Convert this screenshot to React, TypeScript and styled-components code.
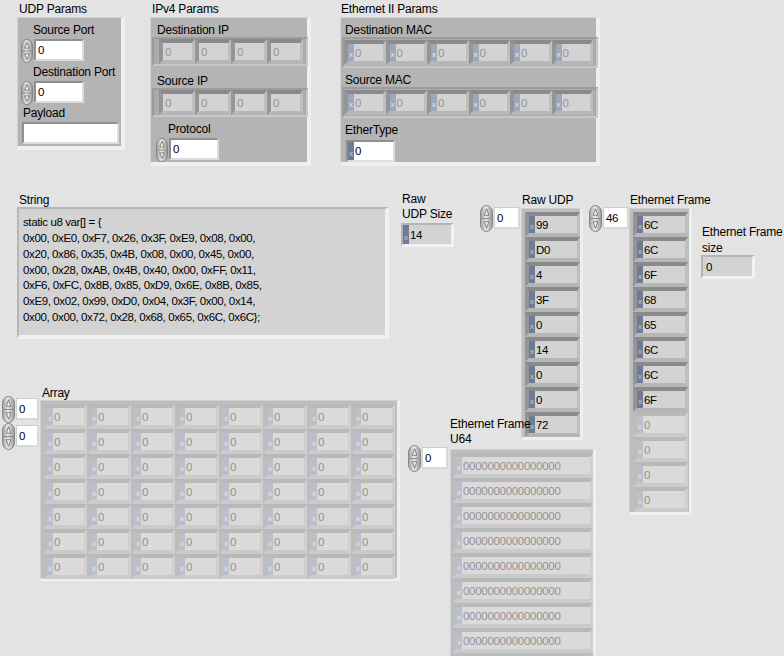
import React from 'react';
import styled, { createGlobalStyle } from 'styled-components';

const Global = createGlobalStyle`
  html, body { margin: 0; padding: 0; background: #e3e3e3; }
  body { font-family: "Liberation Sans", Arial, sans-serif; }
`;

const Panel = styled.div`
  position: relative;
  width: 784px;
  height: 656px;
  overflow: hidden;
  background: #e3e3e3;
  color: #000;
  font-family: "Liberation Sans", Arial, sans-serif;
`;

/* free-canvas placement of front panel objects */
const Spot = styled.div<{ $x: number; $y: number; $z?: number }>`
  position: absolute;
  left: ${p => p.$x}px;
  top: ${p => p.$y}px;
  z-index: ${p => p.$z ?? 0};
`;

const Caption = styled.div<{ $ml?: number; $mt?: number; $lh?: number }>`
  font-size: 12px;
  line-height: ${p => p.$lh ?? 14}px;
  white-space: pre;
  margin-left: ${p => p.$ml ?? 0}px;
  margin-top: ${p => p.$mt ?? 0}px;
  letter-spacing: -0.2px;
`;

const ClusterBox = styled.div<{ $w: number; $h: number }>`
  box-sizing: border-box;
  width: ${p => p.$w}px;
  height: ${p => p.$h}px;
  background: #b4b4b4;
  border-style: solid;
  border-width: 1px 4px 4px 1px;
  border-color: #d4d4d4 #efefef #efefef #d4d4d4;
  display: flex;
  flex-direction: column;
  align-items: flex-start;
`;

const SubCluster = styled.div<{ $w: number; $h: number; $pl: number; $cw: number }>`
  box-sizing: border-box;
  width: ${p => p.$w}px;
  height: ${p => p.$h}px;
  margin-left: 1px;
  padding-left: ${p => p.$pl}px;
  border-style: solid;
  border-width: 2px;
  border-color: #9c9c9c #c8c8c8 #c8c8c8 #9c9c9c;
  background: #ababab;
  display: grid;
  grid-auto-flow: column;
  grid-auto-columns: ${p => p.$cw}px;
  align-content: center;
`;

const Cell = styled.div<{ $w: number; $off?: boolean }>`
  box-sizing: border-box;
  width: ${p => p.$w}px;
  height: 25px;
  border-style: solid;
  border-width: 4px 3px 4px 4px;
  border-color: ${p => (p.$off ? '#b9b9b9 #cfcfcf #cbcbcb #bdbdbd' : '#8a8a8a #bebebe #b6b6b6 #959595')};
  background: ${p => (p.$off ? '#dadada' : '#d3d3d3')};
  display: flex;
  align-items: stretch;
  overflow: hidden;
`;

const Radix = styled.span<{ $tone: 'dark' | 'mid' | 'light' }>`
  flex: none;
  width: 6px;
  box-sizing: border-box;
  padding-bottom: 2px;
  background: ${p => (p.$tone === 'dark' ? '#6d7b97' : p.$tone === 'mid' ? '#9ea8ba' : '#b9c0cc')};
  color: ${p => (p.$tone === 'dark' ? '#c4cbd9' : '#e4e7ec')};
  font-size: 8px;
  line-height: 8px;
  display: flex;
  align-items: flex-end;
  justify-content: center;
`;

const Val = styled.span<{ $muted?: boolean; $pl?: number }>`
  padding-left: ${p => p.$pl ?? 1}px;
  font-size: 11.5px;
  letter-spacing: -0.3px;
  color: ${p => (p.$muted ? '#939393' : '#000')};
  display: flex;
  align-items: center;
  white-space: pre;
`;

const CtlField = styled.div<{ $w: number; $h: number; $mt?: number; $ml?: number; $flat?: boolean }>`
  box-sizing: border-box;
  width: ${p => p.$w}px;
  height: ${p => p.$h}px;
  margin-top: ${p => p.$mt ?? 0}px;
  margin-left: ${p => p.$ml ?? 0}px;
  background: #fff;
  border-style: solid;
  border-width: ${p => (p.$flat ? '1px 2px 2px 1px' : '2px')};
  border-color: ${p => (p.$flat ? '#cdcdcd #d9d9d9 #d9d9d9 #cdcdcd' : '#8f8f8f #dcdcdc #dcdcdc #8f8f8f')};
  display: flex;
  align-items: stretch;
`;

const IndField = styled.div<{ $w: number; $h: number }>`
  box-sizing: border-box;
  width: ${p => p.$w}px;
  height: ${p => p.$h}px;
  background: #d3d3d3;
  border-style: solid;
  border-width: 2px 3px 3px 2px;
  border-color: #b4b4b4 #f2f2f2 #f2f2f2 #b4b4b4;
  display: flex;
  align-items: stretch;
`;

const NumRow = styled.div<{ $ml?: number; $mt?: number }>`
  display: flex;
  align-items: flex-start;
  gap: 1px;
  margin-left: ${p => p.$ml ?? 0}px;
  margin-top: ${p => p.$mt ?? 0}px;
`;

const IndexStack = styled.div`
  display: flex;
  flex-direction: column;
`;

const SpinSvg = styled.svg`
  display: block;
  flex: none;
`;

function Spinner({ h = 24, w = 12 }: { h?: number; w?: number }) {
  const cx = w / 2;
  const r = (w - 1) / 2;
  const mid = h / 2;
  return (
    <SpinSvg width={w} height={h} viewBox={`0 0 ${w} ${h}`}>
      <defs>
        <linearGradient id="spinG" x1="0" y1="0" x2="1" y2="0">
          <stop offset="0" stopColor="#9c9c9c" />
          <stop offset="0.45" stopColor="#ebebeb" />
          <stop offset="1" stopColor="#949494" />
        </linearGradient>
      </defs>
      <path
        d={`M0.5 ${mid} L0.5 ${r + 1.5} A${r} ${r + 1} 0 0 1 ${w - 0.5} ${r + 1.5} L${w - 0.5} ${mid} L${w - 0.5} ${h - r - 1.5} A${r} ${r + 1} 0 0 1 0.5 ${h - r - 1.5} Z`}
        fill="url(#spinG)"
        stroke="#878787"
      />
      <line x1="1" y1={mid} x2={w - 1} y2={mid} stroke="#8a8a8a" />
      <path d={`M${cx} ${h * 0.14} L${cx + 2.3} ${h * 0.38} H${cx - 2.3} Z`} fill="#f4f4f4" stroke="#666" strokeWidth="0.8" />
      <path d={`M${cx} ${h * 0.86} L${cx + 2.3} ${h * 0.62} H${cx - 2.3} Z`} fill="#f4f4f4" stroke="#666" strokeWidth="0.8" />
    </SpinSvg>
  );
}

function NumCtl({ w, value, ml, mt }: { w: number; value: string; ml?: number; mt?: number }) {
  return (
    <NumRow $ml={ml} $mt={mt}>
      <Spinner h={24} />
      <CtlField $w={w} $h={22}>
        <Val $pl={2}>{value}</Val>
      </CtlField>
    </NumRow>
  );
}

function IndexCtl({ value, w }: { value: string; w: number }) {
  return (
    <NumRow>
      <Spinner h={27} w={13} />
      <CtlField $w={w} $h={22} $mt={2} $flat>
        <Val $pl={2}>{value}</Val>
      </CtlField>
    </NumRow>
  );
}

const ArrayFrame = styled.div<{ $w: number; $h: number; $cols: number; $cw: number; $pl: number }>`
  box-sizing: border-box;
  width: ${p => p.$w}px;
  height: ${p => p.$h}px;
  background: #bdbdbd;
  border-style: solid;
  border-width: 1px 3px 3px 1px;
  border-color: #d0d0d0 #efefef #efefef #d0d0d0;
  padding: 3px 0 0 ${p => p.$pl}px;
  display: grid;
  grid-template-columns: repeat(${p => p.$cols}, ${p => p.$cw}px);
  grid-auto-rows: 25px;
  align-content: start;
`;

const StringBox = styled.div`
  box-sizing: border-box;
  width: 372px;
  height: 132px;
  background: #d3d3d3;
  border-style: solid;
  border-width: 2px 4px 4px 2px;
  border-color: #b6b6b6 #f0f0f0 #f0f0f0 #b6b6b6;
  padding: 6px 0 0 4px;
  font-size: 11.5px;
  letter-spacing: -0.38px;
  line-height: 15.85px;
  white-space: pre;
`;

const PayloadField = styled.div`
  box-sizing: border-box;
  width: 97px;
  height: 22px;
  margin-left: 4px;
  margin-top: 2px;
  background: #fff;
  border-style: solid;
  border-width: 2px;
  border-color: #8f8f8f #dcdcdc #dcdcdc #8f8f8f;
`;

function HexCell({ w, v, off, mutedRadix }: { w: number; v: string; off?: boolean; mutedRadix?: boolean }) {
  return (
    <Cell $w={w} $off={off}>
      <Radix $tone={off ? 'light' : mutedRadix ? 'mid' : 'dark'}>x</Radix>
      <Val $muted={off || mutedRadix}>{v}</Val>
    </Cell>
  );
}

const stringText = [
  'static u8 var[] = {',
  '0x00, 0xE0, 0xF7, 0x26, 0x3F, 0xE9, 0x08, 0x00,',
  '0x20, 0x86, 0x35, 0x4B, 0x08, 0x00, 0x45, 0x00,',
  '0x00, 0x28, 0xAB, 0x4B, 0x40, 0x00, 0xFF, 0x11,',
  '0xF6, 0xFC, 0x8B, 0x85, 0xD9, 0x6E, 0x8B, 0x85,',
  '0xE9, 0x02, 0x99, 0xD0, 0x04, 0x3F, 0x00, 0x14,',
  '0x00, 0x00, 0x72, 0x28, 0x68, 0x65, 0x6C, 0x6C};',
].join('\n');

const rawUdp = ['99', 'D0', '4', '3F', '0', '14', '0', '0', '72'];
const ethFrame = ['6C', '6C', '6F', '68', '65', '6C', '6C', '6F'];

export default function App() {
  return (
    <>
      <Global />
      <Panel>
        {/* UDP Params */}
        <Spot $x={19} $y={2}><Caption>UDP Params</Caption></Spot>
        <Spot $x={17} $y={17}>
          <ClusterBox $w={108} $h={133}>
            <Caption $ml={15} $mt={5}>Source Port</Caption>
            <NumCtl ml={3} mt={2} w={50} value="0" />
            <Caption $ml={15} $mt={2}>Destination Port</Caption>
            <NumCtl ml={3} mt={2} w={50} value="0" />
            <Caption $ml={5} $mt={1}>Payload</Caption>
            <PayloadField />
          </ClusterBox>
        </Spot>

        {/* IPv4 Params */}
        <Spot $x={152} $y={2}><Caption>IPv4 Params</Caption></Spot>
        <Spot $x={150} $y={17}>
          <ClusterBox $w={161} $h={149}>
            <Caption $ml={6} $mt={5}>Destination IP</Caption>
            <SubCluster $w={156} $h={29} $pl={5} $cw={36}>
              {[0, 1, 2, 3].map(i => (
                <Cell key={i} $w={36}><Val $muted $pl={2}>0</Val></Cell>
              ))}
            </SubCluster>
            <Caption $ml={6} $mt={8}>Source IP</Caption>
            <SubCluster $w={156} $h={29} $pl={5} $cw={36}>
              {[0, 1, 2, 3].map(i => (
                <Cell key={i} $w={36}><Val $muted $pl={2}>0</Val></Cell>
              ))}
            </SubCluster>
            <Caption $ml={17} $mt={5}>Protocol</Caption>
            <NumCtl ml={5} mt={2} w={50} value="0" />
          </ClusterBox>
        </Spot>

        {/* Ethernet II Params */}
        <Spot $x={341} $y={2}><Caption>Ethernet II Params</Caption></Spot>
        <Spot $x={340} $y={17}>
          <ClusterBox $w={260} $h={149}>
            <Caption $ml={4} $mt={5}>Destination MAC</Caption>
            <SubCluster $w={256} $h={31} $pl={0} $cw={41.5}>
              {[0, 1, 2, 3, 4, 5].map(i => <HexCell key={i} w={41.5} v="0" mutedRadix />)}
            </SubCluster>
            <Caption $ml={4} $mt={5}>Source MAC</Caption>
            <SubCluster $w={256} $h={31} $pl={0} $cw={41.5}>
              {[0, 1, 2, 3, 4, 5].map(i => <HexCell key={i} w={41.5} v="0" mutedRadix />)}
            </SubCluster>
            <Caption $ml={4} $mt={5}>EtherType</Caption>
            <CtlField $w={49} $h={22} $mt={3} $ml={5}>
              <Radix $tone="dark">x</Radix>
              <Val>0</Val>
            </CtlField>
          </ClusterBox>
        </Spot>

        {/* String */}
        <Spot $x={19} $y={193}><Caption>String</Caption></Spot>
        <Spot $x={17} $y={207}>
          <StringBox>{stringText}</StringBox>
        </Spot>

        {/* Raw UDP Size */}
        <Spot $x={402} $y={192}><Caption $lh={15}>{'Raw\nUDP Size'}</Caption></Spot>
        <Spot $x={401} $y={223}>
          <IndField $w={53} $h={24}>
            <Radix $tone="dark">x</Radix>
            <Val>14</Val>
          </IndField>
        </Spot>

        {/* Raw UDP */}
        <Spot $x={480} $y={205}><IndexCtl value="0" w={26} /></Spot>
        <Spot $x={522} $y={193}><Caption>Raw UDP</Caption></Spot>
        <Spot $x={521} $y={208}>
          <ArrayFrame $w={62} $h={232} $cols={1} $cw={55} $pl={3}>
            {rawUdp.map((v, i) => <HexCell key={i} w={55} v={v} />)}
          </ArrayFrame>
        </Spot>

        {/* Ethernet Frame */}
        <Spot $x={589} $y={205}><IndexCtl value="46" w={26} /></Spot>
        <Spot $x={630} $y={193}><Caption>Ethernet Frame</Caption></Spot>
        <Spot $x={629} $y={208}>
          <ArrayFrame $w={63} $h={307} $cols={1} $cw={55} $pl={3}>
            {ethFrame.map((v, i) => <HexCell key={i} w={55} v={v} />)}
            {[0, 1, 2, 3].map(i => <HexCell key={'d' + i} w={55} v="0" off />)}
          </ArrayFrame>
        </Spot>

        {/* Ethernet Frame size */}
        <Spot $x={702} $y={224}><Caption $lh={16}>{'Ethernet Frame\nsize'}</Caption></Spot>
        <Spot $x={701} $y={255}>
          <IndField $w={54} $h={24}>
            <Val $pl={3}>0</Val>
          </IndField>
        </Spot>

        {/* 2D Array */}
        <Spot $x={42} $y={386}><Caption>Array</Caption></Spot>
        <Spot $x={2} $y={396}>
          <IndexStack>
            <IndexCtl value="0" w={23} />
            <IndexCtl value="0" w={23} />
          </IndexStack>
        </Spot>
        <Spot $x={40} $y={400}>
          <ArrayFrame $w={360} $h={181} $cols={8} $cw={44} $pl={2}>
            {Array.from({ length: 56 }).map((_, i) => <HexCell key={i} w={44} v="0" off />)}
          </ArrayFrame>
        </Spot>

        {/* Ethernet Frame U64 */}
        <Spot $x={450} $y={417} $z={2}><Caption $lh={15}>{'Ethernet Frame\nU64'}</Caption></Spot>
        <Spot $x={408} $y={445}><IndexCtl value="0" w={26} /></Spot>
        <Spot $x={450} $y={449}>
          <ArrayFrame $w={146} $h={212} $cols={1} $cw={141} $pl={1}>
            {Array.from({ length: 8 }).map((_, i) => <HexCell key={i} w={141} v="0000000000000000" off />)}
          </ArrayFrame>
        </Spot>
      </Panel>
    </>
  );
}
